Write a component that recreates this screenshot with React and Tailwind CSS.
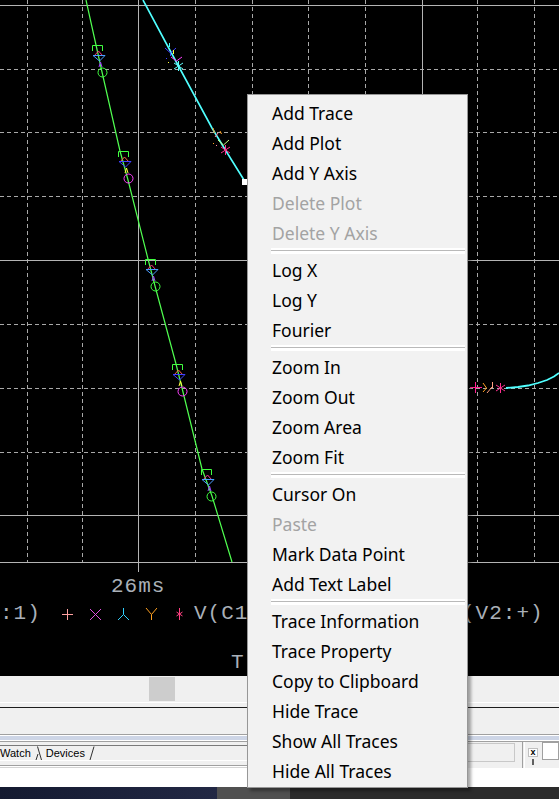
import React from "react";

const menuSections = [
  [
    { label: "Add Trace" },
    { label: "Add Plot" },
    { label: "Add Y Axis" },
    { label: "Delete Plot", disabled: true },
    { label: "Delete Y Axis", disabled: true },
  ],
  [{ label: "Log X" }, { label: "Log Y" }, { label: "Fourier" }],
  [{ label: "Zoom In" }, { label: "Zoom Out" }, { label: "Zoom Area" }, { label: "Zoom Fit" }],
  [
    { label: "Cursor On" },
    { label: "Paste", disabled: true },
    { label: "Mark Data Point" },
    { label: "Add Text Label" },
  ],
  [
    { label: "Trace Information" },
    { label: "Trace Property" },
    { label: "Copy to Clipboard" },
    { label: "Hide Trace" },
    { label: "Show All Traces" },
    { label: "Hide All Traces" },
  ],
];

// marker groups sitting on the green trace
const greenGroups = [
  { x: 92, y: 45, up: "#ff3080", down: "#4a9cff", lam: "#a040ff", ring: "#40ff40" },
  { x: 118, y: 151, up: "#ff5a4a", down: "#4040ff", lam: "#ffff40", ring: "#ff40ff" },
  { x: 145, y: 259, up: "#ff3080", down: "#4a9cff", lam: "#a040ff", ring: "#40ff40" },
  { x: 172, y: 364, up: "#ff5a4a", down: "#4040ff", lam: "#ffff40", ring: "#ff40ff" },
  { x: 201, y: 469, up: "#ff30a0", down: "#4a9cff", lam: "#a040ff", ring: "#40ff40" },
];

const vDash = [27, 82, 195, 252, 308, 365, 477, 534];
const vSolid = [138, 422];
const hDash = [69, 132, 196, 324, 388, 452];
const hSolid = [5, 260, 515, 562];

const MarkerGroup = ({ g }) => (
  <g fill="none" strokeWidth="1">
    <path d={`M${g.x + 0.5} ${g.y + 6}V${g.y + 0.5}H${g.x + 10.5}V${g.y + 6}`} stroke="#40ff40" />
    <path d={`M${g.x + 2} ${g.y + 11}L${g.x + 6.5} ${g.y + 6}L${g.x + 11} ${g.y + 11}`} stroke={g.up} />
    <path d={`M${g.x + 1} ${g.y + 10.5}H${g.x + 13}L${g.x + 7.5} ${g.y + 16}Z`} stroke={g.down} />
    <path d={`M${g.x + 7} ${g.y + 22}L${g.x + 8.5} ${g.y + 17}L${g.x + 10} ${g.y + 22}`} stroke={g.lam} />
    <circle cx={g.x + 10.5} cy={g.y + 27.5} r="4.5" stroke={g.ring} />
  </g>
);

const Star = ({ x, y, color, r = 5 }) => (
  <g stroke={color} strokeWidth="1">
    <line x1={x + 0.5} y1={y - r} x2={x + 0.5} y2={y + r} />
    <line x1={x - r + 1} y1={y - r + 2} x2={x + r} y2={y + r - 2} />
    <line x1={x + r} y1={y - r + 2} x2={x - r + 1} y2={y + r - 2} />
  </g>
);

const PlotSvg = () => (
  <svg width="559" height="572" className="block">
    {vDash.map((x) => (
      <line key={`vd${x}`} x1={x + 0.5} y1="0" x2={x + 0.5} y2="562" stroke="#a8a8a8" strokeDasharray="4 3" />
    ))}
    {hDash.map((y) => (
      <line key={`hd${y}`} x1="0" y1={y + 0.5} x2="559" y2={y + 0.5} stroke="#a8a8a8" strokeDasharray="4 3" />
    ))}
    {vSolid.map((x) => (
      <line key={`vs${x}`} x1={x + 0.5} y1="0" x2={x + 0.5} y2="572" stroke="#b4b4b4" />
    ))}
    {hSolid.map((y) => (
      <line key={`hs${y}`} x1="0" y1={y + 0.5} x2="559" y2={y + 0.5} stroke="#b4b4b4" />
    ))}

    {/* green trace */}
    <polyline
      points="86,0 96,45 102,72 120,151 128,180 148,259 155,286 176,364 183,392 202,469 212,496 232,562"
      fill="none"
      stroke="#50ff50"
      strokeWidth="1.2"
    />
    {greenGroups.map((g) => (
      <MarkerGroup key={g.y} g={g} />
    ))}

    {/* cyan trace */}
    <polyline points="143,0 166,43 179,67 212,128 226,151 244,180" fill="none" stroke="#50ffff" strokeWidth="1.6" />
    <line x1="169.5" y1="43" x2="169.5" y2="47" stroke="#40ffff" />
    <path d="M165 48L170.5 53L176 48M170.5 53V56" fill="none" stroke="#4040ff" />
    <line x1="173.5" y1="50" x2="173.5" y2="54" stroke="#ffff40" />
    <path d="M171 57L176.5 61L182 57" fill="none" stroke="#ff40ff" />
    <rect x="168" y="62" width="1" height="1" fill="#ffff40" />
    <rect x="166" y="58" width="1" height="1" fill="#4040ff" />
    <Star x={178} y={66} color="#60ffff" />
    <path d="M213 128L214.5 133M220 131L221.5 134" fill="none" stroke="#ffa020" />
    <path d="M218 133L215 137" fill="none" stroke="#ff80a0" />
    <rect x="213" y="143" width="1" height="1" fill="#ffa020" />
    <rect x="216" y="145" width="1" height="1" fill="#ff80a0" />
    <path d="M218 140L223.5 145L229 140" fill="none" stroke="#c0ff80" />
    <Star x={225} y={150} color="#ff3090" />
    <rect x="242" y="179" width="5" height="6" fill="#ffffff" />

    {/* right hand trace */}
    <polyline
      points="506,388 518,387 528,385.5 538,383 547,380 554,376.5 559,373"
      fill="none"
      stroke="#50ffff"
      strokeWidth="1.8"
    />
    <path d="M470 387.5H482M475.5 382V393" fill="none" stroke="#ff2090" />
    <path d="M483 383L486.5 388L483 392" fill="none" stroke="#ffa020" />
    <path d="M487 393L492 387M492.5 382V388" fill="none" stroke="#ffa080" />
    <Star x={500} y={388} color="#ff3090" />
  </svg>
);

const LegendMark = ({ children }) => (
  <svg width="12" height="14" className="shrink-0">
    {children}
  </svg>
);

const Legend = () => (
  <div className="flex h-[24px] items-center whitespace-nowrap leading-[24px]">
    <span className="w-[61px] shrink-0">:1)</span>
    <LegendMark>
      <path d="M1 7.5H12M6.5 2V13" stroke="#ffa0a0" fill="none" />
    </LegendMark>
    <span className="w-[16px] shrink-0" />
    <LegendMark>
      <path d="M1 2L12 13M12 2L1 13" stroke="#e050e0" fill="none" />
    </LegendMark>
    <span className="w-[16px] shrink-0" />
    <LegendMark>
      <path d="M6.5 1V7.5L1 13M6.5 7.5L12 13" stroke="#30d0ff" fill="none" />
    </LegendMark>
    <span className="w-[16px] shrink-0" />
    <LegendMark>
      <path d="M1 1L6.5 7.5L12 1M6.5 7.5V13" stroke="#ffa020" fill="none" />
    </LegendMark>
    <span className="w-[18px] shrink-0" />
    <LegendMark>
      <path d="M4.5 1V13M1.5 5L7.5 9M7.5 5L1.5 9" stroke="#ff4080" fill="none" />
    </LegendMark>
    <span className="ml-[7px] w-[268px] shrink-0">V(C1</span>
    <span>(V2:+)</span>
  </div>
);

const ContextMenu = () => (
  <div className="absolute left-[247px] top-[94px] w-[221px] border border-[#979797] bg-[#f2f2f2] pb-[1px] pt-[3px] font-['Noto_Sans',sans-serif] text-[17.5px] shadow-[3px_3px_3px_rgba(0,0,0,0.35)]">
    {menuSections.map((section, i) => (
      <div key={i}>
        {i > 0 && (
          <div className="h-[7px] pl-[23px] pr-[2px]">
            <div className="h-[6px] bg-white pt-[2px]">
              <div className="h-px bg-[#b9b9b9]" />
            </div>
          </div>
        )}
        {section.map((item) => (
          <div
            key={item.label}
            className={`h-[30px] pl-[24px] leading-[30px] ${item.disabled ? "text-[#a3a3a3]" : "text-black"}`}
          >
            {item.label}
          </div>
        ))}
      </div>
    ))}
  </div>
);

const Tabs = () => (
  <div className="flex h-[14px] items-end bg-[#f0f0f0] font-['Liberation_Sans',Arial,sans-serif] text-[11px] leading-[13px] text-black">
    <span>Watch</span>
    <svg width="9" height="14" className="ml-[3px] shrink-0">
      <path d="M2 14L4 8M3.5 0.5L7.5 14" stroke="#303030" fill="none" />
    </svg>
    <span className="ml-[3px]">Devices</span>
    <svg width="6" height="14" className="ml-[4px] shrink-0">
      <path d="M1 14L5 0.5" stroke="#303030" fill="none" />
    </svg>
  </div>
);

export default function App() {
  return (
    <div className="relative h-[799px] w-[559px] overflow-hidden bg-[#f0f0f0]">
      <div className="h-[676px] bg-black font-['Liberation_Mono',monospace] text-[21px] tracking-[1px] text-[#aab0b8]">
        <PlotSvg />
        <div className="h-[30px] pl-[111px] leading-[30px]">26ms</div>
        <Legend />
        <div className="mt-[24px] h-[26px] pl-[231px] leading-[26px]">T</div>
      </div>

      {/* horizontal scroll bar */}
      <div className="h-[26px] bg-[#f0f0f0] pt-[1px]">
        <div className="ml-[149px] h-[24px] w-[26px] bg-[#cdcdcd]" />
      </div>
      <div className="h-[5px] border-t border-white bg-[#f0f0f0]" />
      <div className="h-px bg-[#1e1e1e]" />
      <div className="h-[26px] bg-[#f0f0f0]" />
      <div className="h-px bg-[#a0a0a0]" />
      <div className="h-px bg-white" />
      <div className="h-[4px] bg-[#cdd5e6]" />
      <div className="h-px bg-white" />
      <div className="h-px bg-[#a0a0a0]" />

      <div className="flex h-[26px]">
        <div className="flex w-[462px] flex-col">
          <div className="h-[3px] bg-[#f0f0f0]" />
          <div className="h-px bg-[#7a7a7a]" />
          <Tabs />
          <div className="h-px bg-white" />
          <div className="h-[4px] bg-[#f0f0f0]" />
          <div className="h-px bg-[#a0a0a0]" />
          <div className="h-px bg-white" />
          <div className="h-px bg-[#d4d4d4]" />
        </div>
        <div className="flex flex-1 bg-[#f0f0f0]">
          <div className="mt-px h-[19px] w-[53px] border border-[#c8c8c8] bg-[#f0f0f0]" />
          <div className="ml-[7px] h-full w-[3px] border-l border-r border-l-[#a0a0a0] border-r-white" />
          <div className="ml-[3px] flex w-[10px] flex-col">
            <div className="mt-[6px] flex h-[9px] items-center justify-center border border-[#c0c0c0] bg-white font-['Liberation_Sans',sans-serif] text-[9px] font-bold leading-none">
              x
            </div>
            <div className="mx-auto mt-[2px] h-[6px] w-[2px] bg-[#606060]" />
          </div>
          <div className="ml-[4px] h-[18px] flex-1 border border-[#a0a0a0] bg-white" />
        </div>
      </div>

      <div className="h-[19px] bg-white" />
      <div className="flex h-[12px]">
        <div className="w-[217px] bg-gradient-to-r from-[#141a30] to-[#222844]" />
        <div className="w-[73px] bg-[#505050]" />
        <div className="flex-1 bg-[#2c2c2c]" />
      </div>

      <ContextMenu />
    </div>
  );
}
